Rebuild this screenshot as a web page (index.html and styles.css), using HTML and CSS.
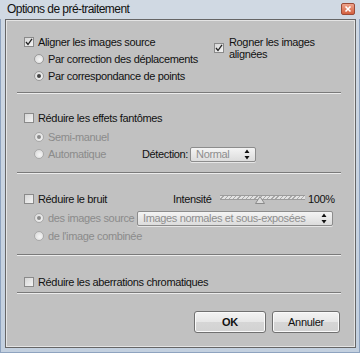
FILE: index.html
```html
<!DOCTYPE html>
<html lang="fr">
<head>
<meta charset="utf-8">
<title>Options de pré-traitement</title>
<link rel="stylesheet" href="styles.css">
</head>
<body>
<div class="window">
  <div class="titlebar">
    <span class="title">Options de pré-traitement</span>
    <span class="close">
      <svg width="14" height="12" viewBox="0 0 14 12"><path d="M4.5 3.5 L9.5 8.5 M9.5 3.5 L4.5 8.5" stroke="#fff" stroke-width="1.6"/></svg>
    </span>
  </div>
  <div class="client">
    <div class="sec1">
      <div class="col-left">
        <div class="row"><span class="chk checked"><svg width="8" height="8" viewBox="0 0 8 8"><path d="M1 4 L3 6.5 L7 0.8" fill="none" stroke="#222" stroke-width="1.3"/></svg></span><span>Aligner les images source</span></div>
        <div class="row sub"><span class="rad"></span><span>Par correction des déplacements</span></div>
        <div class="row sub"><span class="rad on"></span><span>Par correspondance de points</span></div>
      </div>
      <div class="rogner">
        <span class="chk checked nomargin"><svg width="8" height="8" viewBox="0 0 8 8"><path d="M1 4 L3 6.5 L7 0.8" fill="none" stroke="#222" stroke-width="1.3"/></svg></span>
        <span class="two-lines">Rogner les images<br>alignées</span>
      </div>
    </div>
    <div class="sep s1"></div>

    <div class="sec2">
      <div class="row"><span class="chk"></span><span>Réduire les effets fantômes</span></div>
      <div class="row sub gap2 dis"><span class="rad on"></span><span>Semi-manuel</span></div>
      <div class="row sub tall dis"><span class="rad"></span><span class="auto">Automatique</span><span class="lbl en">Détection:</span><span class="select sel-small"><span>Normal</span><span class="arrows"><svg width="6" height="11" viewBox="0 0 6 11"><path d="M3 0.5 L5.5 4 L0.5 4 Z M3 10.5 L5.5 7 L0.5 7 Z" fill="#111"/></svg></span></span></div>
    </div>
    <div class="sep s2"></div>

    <div class="sec3">
      <div class="row"><span class="chk"></span><span class="bruit">Réduire le bruit</span><span class="intens">Intensité</span><span class="slider"><span class="track"></span><span class="thumb"><svg width="10" height="8" viewBox="0 0 10 8"><path d="M5 0.5 L9.5 7.5 L0.5 7.5 Z" fill="#dcdcdc" stroke="#8a8a8a" stroke-width="1"/></svg></span></span><span class="pct">100%</span></div>
      <div class="row sub gap2 tall dis"><span class="rad on"></span><span class="dsrc">des images source</span><span class="select sel-wide"><span>Images normales et sous-exposées</span><span class="arrows"><svg width="6" height="11" viewBox="0 0 6 11"><path d="M3 0.5 L5.5 4 L0.5 4 Z M3 10.5 L5.5 7 L0.5 7 Z" fill="#111"/></svg></span></span></div>
      <div class="row sub dis"><span class="rad"></span><span>de l'image combinée</span></div>
    </div>
    <div class="sep s3"></div>

    <div class="sec4">
      <div class="row"><span class="chk"></span><span>Réduire les aberrations chromatiques</span></div>
    </div>
    <div class="sep s4"></div>

    <div class="buttons">
      <button class="btn ok">OK</button>
      <button class="btn cancel">Annuler</button>
    </div>
  </div>
</div>
</body>
</html>
```

FILE: styles.css
```css
html, body {
  margin: 0;
  padding: 0;
}
body {
  width: 360px;
  height: 353px;
  background: #b7c7da;
  font-family: "Liberation Sans", Arial, sans-serif;
  font-size: 11px;
  letter-spacing: -0.35px;
  color: #111;
  overflow: hidden;
}
.window {
  width: 360px;
  height: 353px;
  box-sizing: border-box;
  display: flex;
  flex-direction: column;
  padding: 0 4px 5px 5px;
  background: linear-gradient(#cfd8e3, #c3d0df);
  box-shadow: inset 1px 0 0 #8ea3bf, inset -1px 0 0 #8ea3bf, inset 0 -1px 0 #8ea3bf;
}
.titlebar {
  height: 19px;
  display: flex;
  align-items: center;
  justify-content: space-between;
  margin-left: -5px;
  margin-right: -4px;
  padding: 0 5px 0 7px;
  background: #d0d9e3;
}
.title {
  font-size: 12px;
  letter-spacing: -0.55px;
  line-height: 19px;
  color: #111;
}
.close {
  width: 14px;
  height: 12px;
  margin-top: -1px;
  box-sizing: border-box;
  border: 1px solid #9b4a36;
  border-radius: 2px;
  background: linear-gradient(#eea38b, #d3603f);
  display: flex;
  align-items: center;
  justify-content: center;
}
.close svg { display: block; margin: -1px; }

.client {
  flex: 1;
  border: 1px solid #666;
  background: #c1c1c1;
  box-shadow: inset 1px 1px 0 #e4e4e4, inset -1px -1px 0 #e4e4e4;
  padding: 13px 14px 0 11px;
  display: flex;
  flex-direction: column;
}

.row {
  display: flex;
  align-items: center;
  height: 17px;
  white-space: nowrap;
}
.row.sub { padding-left: 17px; }
.row.gap2 { margin-top: 2px; }
.row.tall { height: 18px; }
.dis { color: #8b8b8b; }
.en { color: #111; }

.chk {
  width: 10px;
  height: 10px;
  box-sizing: border-box;
  margin-left: 7px;
  margin-right: 4px;
  border: 1px solid #8a8a8a;
  background: linear-gradient(135deg, #d6d6d6, #f4f4f4);
  display: flex;
  align-items: center;
  justify-content: center;
  flex: none;
}
.chk svg { display: block; }
.chk.nomargin { margin-left: 0; margin-right: 5px; }

.rad {
  width: 10px;
  height: 10px;
  box-sizing: border-box;
  border-radius: 50%;
  border: 1px solid #9a9a9a;
  background: radial-gradient(circle at 60% 60%, #f6f6f6, #d4d4d4);
  margin-right: 4px;
  flex: none;
  position: relative;
}
.rad.on::after {
  content: "";
  position: absolute;
  left: 2px;
  top: 2px;
  width: 4px;
  height: 4px;
  border-radius: 50%;
  background: #444;
}
.dis .rad { border-color: #a9a9a9; }
.dis .rad.on::after { background: #8a8a8a; }

.sec1 { display: flex; }
.col-left { width: 197px; }
.rogner {
  display: flex;
  align-items: center;
  margin-top: 3px;
  height: 24px;
}
.two-lines { line-height: 12px; }

.sep {
  height: 0;
  border-top: 1px solid #7a7a7a;
  border-bottom: 1px solid #ececec;
  flex: none;
}
.s1 { margin-top: 8px; }
.sec2 { margin-top: 15px; }
.s2 { margin-top: 9px; }
.sec3 { margin-top: 16px; }
.s3 { margin-top: 10px; }
.sec4 { margin-top: 17px; }
.s4 { margin-top: 2px; }

.auto { width: 94px; }
.lbl { margin-right: 2px; }

.select {
  height: 15px;
  box-sizing: border-box;
  border: 1px solid #8c8c8c;
  border-radius: 2px;
  background: linear-gradient(#f4f4f4, #dcdcdc);
  display: flex;
  align-items: center;
  justify-content: space-between;
  padding: 0 5px 0 5px;
  color: #8e8e8e;
  box-shadow: 0 1px 0 #e6e6e6;
}
.select .arrows { display: flex; }
.select svg { display: block; }
.sel-small { width: 66px; }
.sel-wide { width: 196px; margin-left: 2px; }
.dsrc { width: 87px; }

.bruit { width: 135px; }
.intens { width: 47px; color: #111; }
.slider {
  position: relative;
  width: 85px;
  height: 5px;
  margin-top: -2px;
  margin-right: 3px;
}
.track {
  display: block;
  height: 5px;
  box-sizing: border-box;
  border-top: 1px solid #9c9c9c;
  border-bottom: 1px solid #9c9c9c;
  background: repeating-linear-gradient(135deg, #e2e2e2 0 2px, #a8a8a8 2px 3px);
}
.thumb {
  position: absolute;
  left: 35px;
  top: 1px;
}
.thumb svg { display: block; }
.pct { color: #111; }

.buttons {
  display: flex;
  justify-content: flex-end;
  margin-top: 17px;
  margin-right: 1px;
}
.btn {
  height: 22px;
  box-sizing: border-box;
  border: 1px solid #707070;
  border-radius: 3px;
  background: linear-gradient(#f3f3f3, #e6e6e6 50%, #d6d6d6 51%, #d2d2d2);
  font-family: "Liberation Sans", Arial, sans-serif;
  font-size: 11px;
  letter-spacing: -0.3px;
  color: #111;
  padding: 0;
  box-shadow: inset 0 0 0 1px #fafafa;
}
.ok { width: 72px; font-weight: bold; margin-right: 6px; }
.cancel { width: 68px; }
```
